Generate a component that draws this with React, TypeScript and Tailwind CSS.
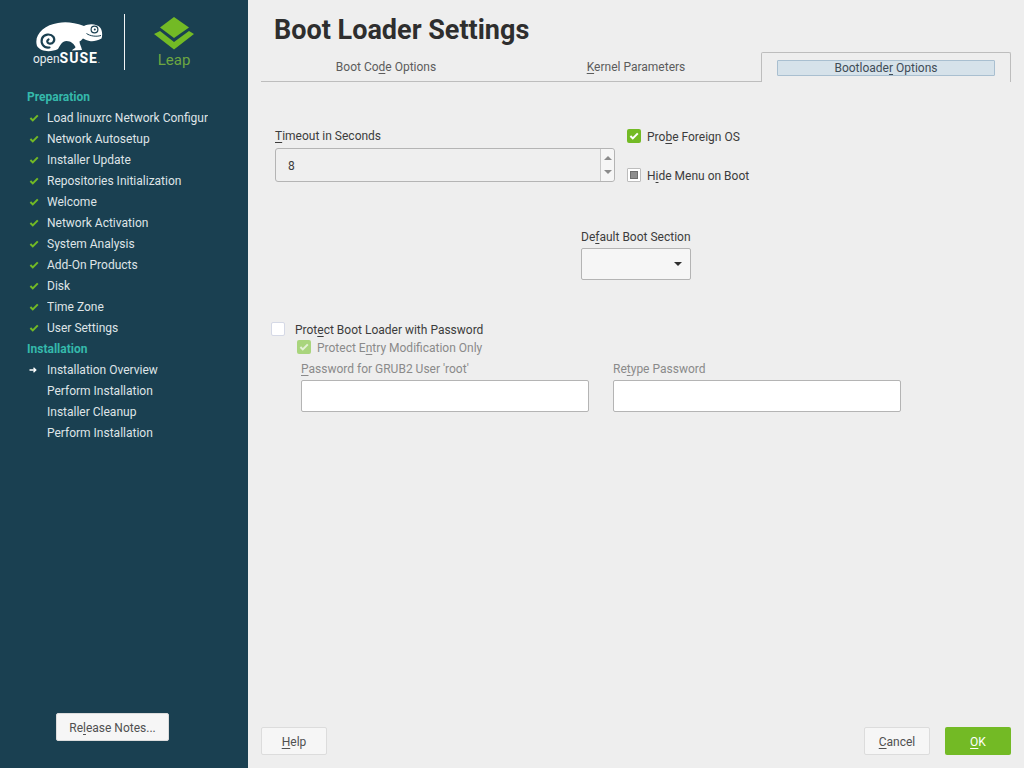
import React from "react";

const Check = ({ color = "#73ba25" }: { color?: string }) => (
  <svg width="10" height="10" viewBox="0 0 10 10" fill="none">
    <path d="M1.4 5 L3.8 7.4 L8.8 2.4" stroke={color} strokeWidth="2" />
  </svg>
);

const Arrow = () => (
  <svg width="8" height="8" viewBox="0 0 8 8" fill="none">
    <path d="M0.5 4 H6.5 M4.5 1.8 L6.8 4 L4.5 6.2" stroke="#ffffff" strokeWidth="1.3" />
  </svg>
);

const done = [
  "Load linuxrc Network Configuration",
  "Network Autosetup",
  "Installer Update",
  "Repositories Initialization",
  "Welcome",
  "Network Activation",
  "System Analysis",
  "Add-On Products",
  "Disk",
  "Time Zone",
  "User Settings",
];

const Step = ({ icon, label }: { icon?: React.ReactNode; label: string }) => (
  <div className="flex h-[21px] items-center pl-[29px]">
    <div className="flex w-[18px] shrink-0 items-center">{icon}</div>
    <div className="w-[161px] overflow-hidden whitespace-nowrap text-[12px] text-[#dfe4e7]">{label}</div>
  </div>
);

const Heading = ({ label }: { label: string }) => (
  <div className="flex h-[21px] items-center pl-[27px] text-[12px] font-bold text-[#35b9ab]">{label}</div>
);

const Logo = () => (
  <div className="flex h-[86px] shrink-0 items-start">
    <div className="ml-[33px] mt-[21px] flex w-[69px] flex-col">
      <svg className="ml-[3px]" width="67" height="31" viewBox="36 21 67 31" fill="none">
        <path
          d="M37 46 C33.5 35 44 25 58 23 C66 21.5 74 22.5 84 26 C88 23.5 97 23 100.5 28 C102.5 31 102.5 36 101.5 38.5 C97 41 93 41.5 89.5 41 C87 40.5 85 39.5 83 38.5 C81.5 40 80.5 41 79.5 41.5 C79.5 44 81.5 47 82 50 L72 50.5 C72.5 49 75.5 48.5 75.5 47 C74 44 71 41 66.5 41 C62 41.2 60.5 45 58 49 C52 52 41 52.5 37 46 Z"
          fill="#ffffff"
        />
        <path
          d="M49.5 47.5 C43.5 48.5 40.5 43 42 38.5 C43.8 34 50.5 33 53.5 37 C55.5 40.5 53 44.5 49 43.5 C47 43 46.5 40.5 48.5 39.5"
          stroke="#1a4051"
          strokeWidth="2.2"
          strokeLinecap="round"
        />
        <circle cx="94.5" cy="29.5" r="3.4" fill="#ffffff" stroke="#1a4051" strokeWidth="1.2" />
        <circle cx="94.8" cy="29.5" r="1" fill="#1a4051" />
        <path d="M86.5 33.5 C90 36 96 37 101 35.5" stroke="#1a4051" strokeWidth="1" />
      </svg>
      <div className="mt-[-1px] flex items-baseline whitespace-nowrap leading-[14px] text-white">
        <span className="text-[12px] text-[#e8ecee]">open</span>
        <span className="text-[14px] font-bold tracking-[1px]">SUSE</span>
        <span className="text-[7px] leading-none">.</span>
      </div>
    </div>
    <div className="ml-[22px] mt-[14px] h-[56px] w-px bg-[#f2f4f5]" />
    <div className="ml-[29px] mt-[17px] flex w-[40px] flex-col items-center">
      <svg width="40" height="33" viewBox="0 0 40 33">
        <path d="M20 0 L35 10.5 L20 21 L6 10.5 Z" fill="#73ba25" />
        <path d="M0 17 L6 14 L20 25 L35 14 L40 17 L20 32.5 Z" fill="#73ba25" />
      </svg>
      <div className="mt-[0px] text-[15px] leading-[20px] text-[#6da741]">Leap</div>
    </div>
  </div>
);

const Tab = ({ children, width }: { children: React.ReactNode; width: string }) => (
  <div className={`flex h-[30px] items-center justify-center border-b border-[#bdbdbd] pt-[1px] text-[12px] text-[#5c5c5c] ${width}`}>
    {children}
  </div>
);

const CheckBox = ({ state }: { state: "on" | "off" | "mixed" | "dim" }) => {
  if (state === "on")
    return (
      <div className="flex h-[14px] w-[14px] shrink-0 items-center justify-center rounded-[2px] bg-[#73ba25]">
        <Check color="#ffffff" />
      </div>
    );
  if (state === "dim")
    return (
      <div className="flex h-[14px] w-[14px] shrink-0 items-center justify-center rounded-[2px] bg-[#a9d57d]">
        <Check color="#e4f1d6" />
      </div>
    );
  if (state === "mixed")
    return (
      <div className="flex h-[14px] w-[14px] shrink-0 items-center justify-center rounded-[1px] border border-[#bdbdbd] bg-white">
        <div className="h-[8px] w-[8px] border border-[#6e6e6e] bg-[#8e8e8e]" />
      </div>
    );
  return <div className="h-[14px] w-[14px] shrink-0 rounded-[2px] border border-[#d5d9e6] bg-white" />;
};

const Btn = ({ children, primary }: { children: React.ReactNode; primary?: boolean }) => (
  <div
    className={
      primary
        ? "flex h-[28px] w-[66px] items-center justify-center rounded-[2px] bg-[#73ba25] pt-[2px] text-[12px] text-white"
        : "flex h-[28px] w-[66px] items-center justify-center rounded-[2px] border border-[#dcdcdc] bg-[#f6f6f6] pt-[2px] text-[12px] text-[#505050]"
    }
  >
    {children}
  </div>
);

const U = ({ children }: { children: React.ReactNode }) => (
  <span className="underline decoration-1 underline-offset-2">{children}</span>
);

const Text = ({ children }: { children: React.ReactNode }) => <span className="pt-[2px]">{children}</span>;

export default function App() {
  return (
    <div className="flex h-[768px] w-[1024px] overflow-hidden bg-[#eeeeee] font-['Roboto',sans-serif]">
      <aside className="flex w-[248px] shrink-0 flex-col bg-[#1a4051]">
        <Logo />
        <Heading label="Preparation" />
        {done.map((d) => (
          <Step key={d} icon={<Check />} label={d} />
        ))}
        <Heading label="Installation" />
        <Step icon={<Arrow />} label="Installation Overview" />
        <Step label="Perform Installation" />
        <Step label="Installer Cleanup" />
        <Step label="Perform Installation" />
        <div className="mt-auto mb-[27px] ml-[56px] flex h-[28px] w-[113px] items-center justify-center rounded-[2px] border border-[#dcdcdc] bg-[#f6f6f6] pt-[2px] text-[12px] text-[#505050]">
          <span>Re<U>l</U>ease Notes...</span>
        </div>
      </aside>

      <main className="flex min-w-0 flex-1 flex-col">
        <div className="flex h-[52px] shrink-0 items-center pl-[26px] pt-[8px] text-[27px] font-bold leading-none text-[#2e2e2e]">
          Boot Loader Settings
        </div>

        <div className="ml-[13px] flex h-[30px] w-[750px] shrink-0">
          <Tab width="w-[250px]">
            <span>Boot Co<U>d</U>e Options</span>
          </Tab>
          <Tab width="w-[250px]">
            <span><U>K</U>ernel Parameters</span>
          </Tab>
          <div className="flex h-[30px] w-[250px] items-center justify-center rounded-t-[2px] border-x border-t border-[#bdbdbd] px-[15px]">
            <div className="flex h-[16px] w-full items-center justify-center rounded-[1px] border border-[#a9bfd0] bg-[#d6e2ea] text-[12px] text-[#3f4c57]">
              <span>Bootloade<U>r</U> Options</span>
            </div>
          </div>
        </div>

        <div className="flex flex-1 flex-col text-[12px] text-[#3c3c3c]">
          <div className="ml-[27px] mt-[47px] flex">
            <div className="flex w-[340px] flex-col">
              <div className="flex h-[14px] items-center"><span><U>T</U>imeout in Seconds</span></div>
              <div className="mt-[5px] flex h-[34px] items-stretch rounded-[3px] border border-[#b4b4b4] bg-[#efefef]">
                <div className="flex flex-1 items-center pl-[12px] pt-[1px]">8</div>
                <div className="flex w-[14px] flex-col items-center justify-center gap-[10px] rounded-r-[3px] border-l border-[#c8c8c8] bg-[#f6f6f6]">
                  <svg width="8" height="4" viewBox="0 0 8 4"><path d="M4 0 L8 4 H0 Z" fill="#8c8c8c" /></svg>
                  <svg width="8" height="4" viewBox="0 0 8 4"><path d="M0 0 H8 L4 4 Z" fill="#8c8c8c" /></svg>
                </div>
              </div>
            </div>
            <div className="ml-[12px] flex flex-col">
              <div className="flex h-[14px] items-center gap-[6px]">
                <CheckBox state="on" />
                <Text>Pro<U>b</U>e Foreign OS</Text>
              </div>
              <div className="mt-[25px] flex h-[14px] items-center gap-[6px]">
                <CheckBox state="mixed" />
                <Text>H<U>i</U>de Menu on Boot</Text>
              </div>
            </div>
          </div>

          <div className="ml-[333px] mt-[48px] flex w-[110px] flex-col">
            <div className="flex h-[14px] items-center whitespace-nowrap"><span>De<U>f</U>ault Boot Section</span></div>
            <div className="mt-[4px] flex h-[32px] items-center justify-end rounded-[2px] border border-[#b4b4b4] bg-[#f6f6f6] pr-[8px]">
              <svg width="8" height="4" viewBox="0 0 8 4"><path d="M0 0 H8 L4 4 Z" fill="#2e2e2e" /></svg>
            </div>
          </div>

          <div className="ml-[23px] mt-[42px] flex h-[14px] items-center gap-[10px]">
            <CheckBox state="off" />
            <Text>Prot<U>e</U>ct Boot Loader with Password</Text>
          </div>
          <div className="ml-[49px] mt-[4px] flex h-[14px] items-center gap-[6px] text-[#8a8a8a]">
            <CheckBox state="dim" />
            <Text>Protect E<U>n</U>try Modification Only</Text>
          </div>
          <div className="ml-[53px] mt-[7px] flex gap-[24px] text-[#8a8a8a]">
            <div className="flex w-[288px] flex-col">
              <div className="flex h-[14px] items-center"><Text><U>P</U>assword for GRUB2 User 'root'</Text></div>
              <div className="mt-[5px] h-[32px] rounded-[2px] border border-[#b4b4b4] bg-white" />
            </div>
            <div className="flex w-[288px] flex-col">
              <div className="flex h-[14px] items-center"><Text>Re<U>t</U>ype Password</Text></div>
              <div className="mt-[5px] h-[32px] rounded-[2px] border border-[#b4b4b4] bg-white" />
            </div>
          </div>

          <div className="mt-auto mb-[13px] ml-[13px] mr-[13px] flex items-center">
            <Btn><span><U>H</U>elp</span></Btn>
            <div className="ml-auto" />
            <Btn><span><U>C</U>ancel</span></Btn>
            <div className="w-[15px]" />
            <Btn primary><span><U>O</U>K</span></Btn>
          </div>
        </div>
      </main>
    </div>
  );
}
